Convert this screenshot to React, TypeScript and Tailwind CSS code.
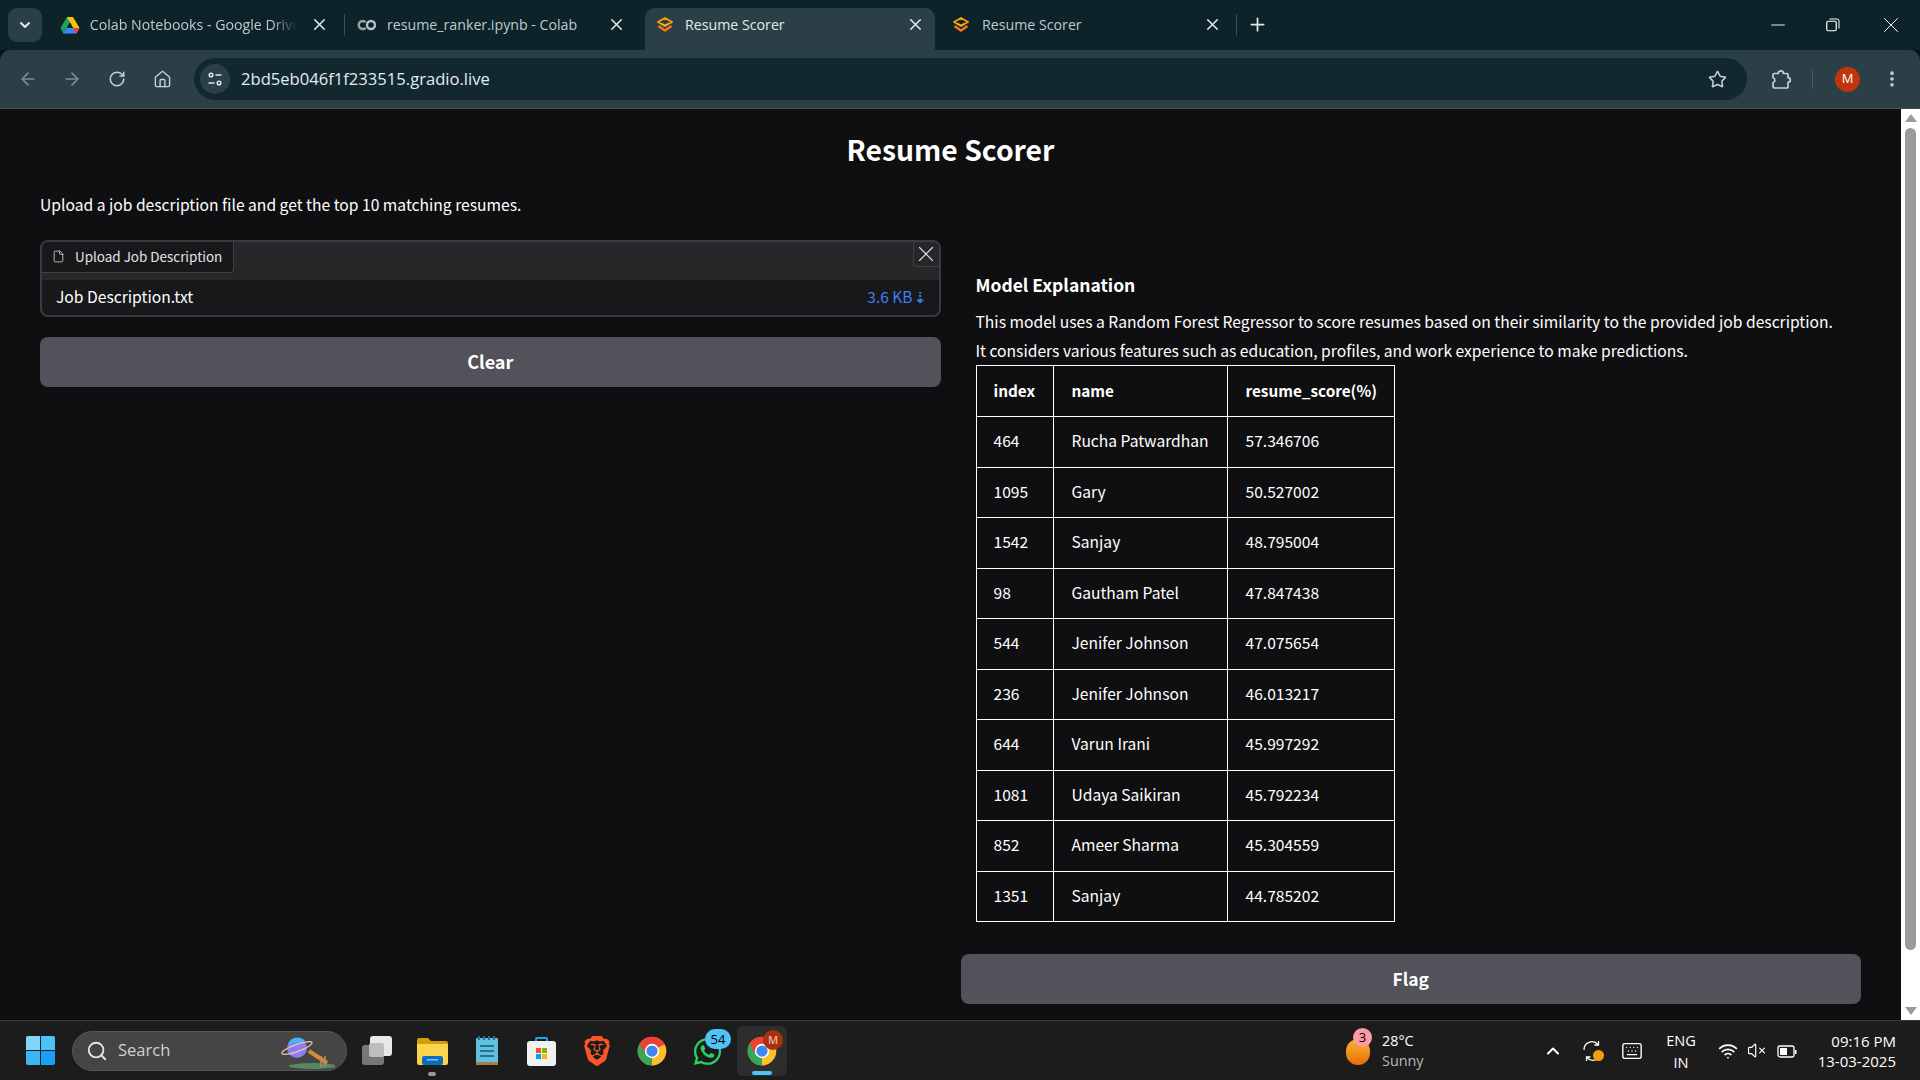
import { ArrowLeft, ArrowRight, RotateCw, Home, Star, ChevronDown, ChevronUp, X, Plus, Minus, EllipsisVertical, Search, Wifi, Keyboard, VolumeX, File } from "lucide-react";
import { SiBrave } from "react-icons/si";
import { FaWhatsapp } from "react-icons/fa";

const rows = [
  ["464", "Rucha Patwardhan", "57.346706"],
  ["1095", "Gary", "50.527002"],
  ["1542", "Sanjay", "48.795004"],
  ["98", "Gautham Patel", "47.847438"],
  ["544", "Jenifer Johnson", "47.075654"],
  ["236", "Jenifer Johnson", "46.013217"],
  ["644", "Varun Irani", "45.997292"],
  ["1081", "Udaya Saikiran", "45.792234"],
  ["852", "Ameer Sharma", "45.304559"],
  ["1351", "Sanjay", "44.785202"],
];

const source = "font-['Noto_Sans_CJK_JP','Noto_Sans',sans-serif]";

function GradioIcon() {
  return (
    <svg width="18" height="18" viewBox="0 0 18 18" fill="none" className="shrink-0">
      <path d="M9 2 L16 6 L9 10 L2 6 Z" stroke="#f59e0b" strokeWidth="2" strokeLinejoin="round" />
      <path d="M2.5 10 L9 14.5 L15.5 10" stroke="#f97316" strokeWidth="2.4" strokeLinejoin="round" />
      <path d="M6 7.5 L9 9.5 L12 7.5" stroke="#fbbf24" strokeWidth="1.4" />
    </svg>
  );
}

function DriveIcon() {
  return (
    <svg width="20" height="18" viewBox="0 0 20 18" className="shrink-0">
      <path d="M7 1h6l-6.5 11H0.5z" fill="#1fa463" />
      <path d="M13 1l6.5 11h-6.2L7 1z" fill="#ffc107" />
      <path d="M0.5 12h19l-3 5.5H3.5z" fill="#4285f4" />
      <path d="M0.5 12h6l-3 5.5z" fill="#0f9d58" />
      <path d="M13.3 12h6.2l-3 5.5z" fill="#ea4335" />
    </svg>
  );
}

function ColabIcon() {
  return (
    <svg width="20" height="12" viewBox="0 0 20 12" fill="none" className="shrink-0">
      <path d="M8.6 3.2A4 4 0 1 0 8.6 8.8" stroke="#9aa5a8" strokeWidth="2.4" />
      <circle cx="14" cy="6" r="4" stroke="#b7c0c2" strokeWidth="2.4" />
    </svg>
  );
}

function ChromeIcon({ size = 30 }: { size?: number }) {
  return (
    <svg width={size} height={size} viewBox="0 0 48 48" className="shrink-0">
      <circle cx="24" cy="24" r="23" fill="#ea4335" />
      <path d="M24 24 L44 13 A23 23 0 0 1 24 47 Z" fill="#fbc02d" />
      <path d="M24 24 L24 47 A23 23 0 0 1 4 12.5 Z" fill="#34a853" />
      <path d="M24 13 H44 A23 23 0 0 0 4 12.5 L14 30 Z" fill="#ea4335" />
      <circle cx="24" cy="24" r="11.5" fill="#fff" />
      <circle cx="24" cy="24" r="9" fill="#4285f4" />
    </svg>
  );
}

function Chrome() {
  const tabText = "overflow-hidden whitespace-nowrap text-[14.2px]";
  return (
    <div className="font-['Open_Sans',sans-serif] shrink-0">
      <div className="h-[50px] bg-[#0c2329] flex items-center">
        <div className="ml-[8px] w-[34px] h-[34px] rounded-[9px] bg-[#2a4046] flex items-center justify-center shrink-0">
          <ChevronDown size={16} strokeWidth={3} className="text-[#e3e9ea]" />
        </div>
        <div className="flex self-end ml-[18px] h-[42px]">
          <div className="flex items-center w-[285px] pb-[9px] shrink-0 text-[#c0cacc]">
            <span className="w-[30px]"><DriveIcon /></span>
            <span className={`w-[209px] mr-[13px] [mask-image:linear-gradient(to_right,black_88%,transparent)] ${tabText}`}>Colab Notebooks - Google Drive</span>
            <X size={19} strokeWidth={2} className="text-[#dfe6e7] shrink-0" />
            <div className="w-[1px] h-[22px] bg-[#3a4f54] ml-[15px]" />
          </div>
          <div className="flex items-center h-[42px] pl-[12px] w-[300px] pb-[9px] shrink-0 text-[#c0cacc]">
            <span className="w-[30px]"><ColabIcon /></span>
            <span className={`w-[220px] ${tabText}`}>resume_ranker.ipynb - Colab</span>
            <X size={19} strokeWidth={2} className="text-[#dfe6e7] shrink-0" />
          </div>
          <div className="flex items-center w-[290px] pl-[11px] pb-[9px] rounded-t-[10px] bg-[#2a4046] text-[#e3e9ea] shrink-0">
            <span className="w-[29px]"><GradioIcon /></span>
            <span className={`w-[221px] ${tabText}`}>Resume Scorer</span>
            <X size={19} strokeWidth={2} className="text-[#dfe6e7] shrink-0" />
          </div>
          <div className="flex items-center w-[340px] pl-[17px] pb-[9px] text-[#c0cacc] shrink-0">
            <span className="w-[30px]"><GradioIcon /></span>
            <span className={`w-[221px] ${tabText}`}>Resume Scorer</span>
            <X size={19} strokeWidth={2} className="text-[#dfe6e7] shrink-0" />
            <div className="w-[1px] h-[22px] bg-[#3a4f54] ml-[14px] shrink-0" />
            <Plus size={21} strokeWidth={2} className="text-[#e3e9ea] ml-[10px] shrink-0" />
          </div>
        </div>
        <div className="ml-auto flex items-center pr-[16px] text-white">
          <Minus size={22} strokeWidth={1} className="mr-[37px]" />
          <svg width="14" height="14" viewBox="0 0 14 14" fill="none" stroke="currentColor" className="mr-[38px]">
            <rect x="0.75" y="3.25" width="9.5" height="9.5" rx="1.5" strokeWidth="1.2" />
            <path d="M3.5 1h7.5a2 2 0 0 1 2 2v7.5" strokeWidth="1" />
          </svg>
          <X size={26} strokeWidth={0.9} />
        </div>
      </div>
      <div className="h-[59px] bg-[#2a4046] border-b border-[#4a4d4e] flex items-center rounded-t-[10px]">
        <ArrowLeft size={20} strokeWidth={2} className="ml-[18px] text-[#7d8d91]" />
        <ArrowRight size={20} strokeWidth={2} className="ml-[24px] text-[#7d8d91]" />
        <RotateCw size={18} strokeWidth={2} className="ml-[26px] text-[#c6d0d2]" />
        <Home size={19} strokeWidth={1.8} className="ml-[27px] text-[#c6d0d2]" />
        <div className="ml-[22px] h-[42px] w-[1553px] bg-[#12282f] rounded-full flex items-center pl-[6px] shrink-0">
          <div className="w-[30px] h-[30px] rounded-full bg-[#2a4046] flex items-center justify-center">
            <svg width="16" height="16" viewBox="0 0 16 16" fill="none" stroke="#dfe6e7" strokeWidth="1.5">
              <circle cx="4" cy="4" r="1.8" />
              <path d="M8.5 4h6M1.5 12h6" />
              <circle cx="12" cy="12" r="1.8" />
            </svg>
          </div>
          <span className="ml-[11px] text-[16.6px] text-[#e3ecef] leading-none">2bd5eb046f1f233515.gradio.live</span>
          <Star size={19} strokeWidth={2} className="ml-auto mr-[20px] text-[#c6d0d2]" />
        </div>
        <svg width="22" height="22" viewBox="0 0 22 22" fill="none" stroke="#c6d0d2" strokeWidth="1.7" strokeLinejoin="round" className="ml-[23px] shrink-0">
          <path d="M3 6.5a1 1 0 0 1 1-1h4.2a2.6 2.6 0 0 1 5.2 0H17a1 1 0 0 1 1 1v3.2a2.3 2.3 0 0 1 0 4.6V19a1 1 0 0 1-1 1H5a2 2 0 0 1-2-2v-3.2a2.6 2.6 0 0 0 0-5z" />
        </svg>
        <div className="ml-[20px] w-[1px] h-[20px] bg-[#455a60]" />
        <div className="ml-[22px] w-[25px] h-[25px] rounded-full bg-[#c0360c] flex items-center justify-center text-white text-[13px]">M</div>
        <EllipsisVertical size={20} strokeWidth={2.4} className="ml-[22px] text-[#c6d0d2]" />
      </div>
    </div>
  );
}

function Page() {
  return (
    <div className={`flex-1 min-w-0 overflow-hidden px-[40px] text-white ${source}`}>
      <h1 className="text-center text-[28.3px] font-semibold leading-[40px] pt-[20px]">Resume Scorer</h1>
      <p className="mt-[24px] text-[15.65px] leading-[24px]">Upload a job description file and get the top 10 matching resumes.</p>
      <div className="grid grid-cols-2 gap-[20px] mt-[23px]">
        <div className="flex flex-col gap-[20px]">
          <div className="relative h-[77px] rounded-[8px] border-2 border-[#3a3a40] bg-[#27272a] overflow-hidden">
            <div className="flex items-center h-[31px] w-[192px] bg-[#18181b] border-r border-b border-[#3f3f46] rounded-br-[4px] pl-[10px] text-[13.45px] text-[#e4e4e7]">
              <File size={13} strokeWidth={1.5} className="text-[#d4d4d8] -translate-y-[1px]" />
              <span className="ml-[10px] leading-none">Upload Job Description</span>
            </div>
            <div className="mt-[7px] h-[35px] bg-[#18181b] flex items-center justify-between pl-[14px] pr-[12px] text-[15.65px]">
              <span className="-translate-y-[1px]">Job Description.txt</span>
              <span className="text-[#3b7ff2] text-[15.5px] -translate-y-[1px] whitespace-nowrap font-['Noto_Sans_CJK_JP','DejaVu_Sans',sans-serif]">3.6 KB<span className="ml-[1px] font-semibold">⇣</span></span>
            </div>
            <div className="absolute top-0 right-0 w-[26px] h-[25px] border-l border-b border-[#3f3f46] rounded-bl-[4px] bg-[#27272a] flex items-center justify-center">
              <X size={26} strokeWidth={1} className="text-[#e4e4e7] shrink-0" />
            </div>
          </div>
          <button className="h-[50px] rounded-[8px] bg-[#52525b] text-[18px] font-semibold text-white pb-[1px]">Clear</button>
        </div>
        <div className="flex flex-col">
          <div className="px-[15px] pt-[31px]">
            <h2 className="text-[17.5px] font-semibold leading-[28px]">Model Explanation</h2>
            <p className="mt-[9px] text-[15.65px] leading-[28.5px] whitespace-nowrap">
              This model uses a Random Forest Regressor to score resumes based on their similarity to the provided job description.<br />
              It considers various features such as education, profiles, and work experience to make predictions.
            </p>
            <table className="border-collapse text-[15.6px] w-[419px] table-fixed">
              <thead>
                <tr className="h-[51px]">
                  <th className="border border-white text-left font-semibold text-[15.3px] pl-[17px] pb-[2px] w-[77px]">index</th>
                  <th className="border border-white text-left font-semibold text-[15.3px] pl-[18px] pb-[2px] w-[174px]">name</th>
                  <th className="border border-white text-left font-semibold text-[15.3px] pl-[18px] pb-[2px]">resume_score(%)</th>
                </tr>
              </thead>
              <tbody>
                {rows.map((r, i) => (
                  <tr key={i} className="h-[50.5px]">
                    {r.map((c, j) => (
                      <td key={j} className={`border border-white font-normal pb-[2px] ${j === 0 ? "pl-[17px]" : "pl-[18px]"}`}>{c}</td>
                    ))}
                  </tr>
                ))}
              </tbody>
            </table>
          </div>
          <button className="mt-[32px] h-[50px] rounded-[8px] bg-[#52525b] text-[17.5px] font-semibold text-white">Flag</button>
        </div>
      </div>
    </div>
  );
}

function Scrollbar() {
  return (
    <div className="w-[19px] shrink-0 bg-white flex flex-col items-center">
      <div className="mt-[5px] w-0 h-0 border-x-[6px] border-x-transparent border-b-[8px] border-b-[#9b9b9b]" />
      <div className="mt-[6px] w-[11px] h-[822px] bg-[#9b9b9b] rounded-full" />
      <div className="mt-auto mb-[5px] w-0 h-0 border-x-[6px] border-x-transparent border-t-[8px] border-t-[#9b9b9b]" />
    </div>
  );
}

function Taskbar() {
  return (
    <div className="h-[60px] shrink-0 bg-[#1c1c1c] border-t border-[#3a3a3a] flex items-center font-['Open_Sans',sans-serif] text-white">
      <div className="ml-[26px] grid grid-cols-2 gap-[1.5px] w-[29px] h-[29px] shrink-0">
        <div className="bg-[#7fd6fb] rounded-tl-[2px]" />
        <div className="bg-[#4cc2fa] rounded-tr-[2px]" />
        <div className="bg-[#3bb5f8] rounded-bl-[2px]" />
        <div className="bg-[#1aa1f5] rounded-br-[2px]" />
      </div>
      <div className="relative ml-[17px] w-[275px] h-[40px] rounded-full bg-[#454545] border border-[#555] flex items-center pl-[13px] shrink-0">
        <Search size={22} strokeWidth={2} className="text-[#e6e6e6]" />
        <span className="ml-[10px] text-[16.5px] text-[#d0d0d0]">Search</span>
        <svg width="56" height="40" viewBox="0 0 56 40" className="absolute right-[11px] top-0">
          <ellipse cx="34" cy="34" rx="24" ry="3" fill="#5fa56e" opacity=".7" />
          <circle cx="18" cy="16" r="10" fill="#8f7bf0" />
          <path d="M9 12a10 10 0 0 1 17-3z" fill="#38bdf8" />
          <ellipse cx="18" cy="16" rx="16" ry="3.5" fill="none" stroke="#e8c9a8" strokeWidth="1.3" transform="rotate(-20 18 16)" />
          <path d="M30 19l18 12" stroke="#d68b3a" strokeWidth="4" />
          <path d="M42 24v11M46 24v11" stroke="#b98a5e" strokeWidth="1.5" />
        </svg>
      </div>
      <div className="relative ml-[15px] w-[30px] h-[30px] shrink-0">
        <div className="absolute left-0 bottom-[1px] w-[22px] h-[20px] rounded-[3px] bg-[#777]" />
        <div className="absolute right-0 top-0 w-[22px] h-[20px] rounded-[3px] bg-[#e8e8e8]" />
        <div className="absolute left-[7px] top-[7px] w-[15px] h-[14px] rounded-[2px] bg-[#bdbdbd]" />
      </div>
      <div className="relative ml-[25px] w-[31px] h-[28px] shrink-0">
        <svg width="31" height="28" viewBox="0 0 31 28">
          <path d="M0 3a2 2 0 0 1 2-2h9l3 3h15a2 2 0 0 1 2 2v3H0z" fill="#d59d08" />
          <path d="M0 7h31v19a2 2 0 0 1-2 2H2a2 2 0 0 1-2-2z" fill="#fcd34d" />
          <rect x="5" y="19" width="21" height="9" rx="2" fill="#0f6cbd" />
          <rect x="10" y="22" width="11" height="1.5" fill="#7cc4f5" />
        </svg>
        <div className="absolute left-[11px] top-[35px] w-[8px] h-[4px] rounded-full bg-[#9a9a9a]" />
      </div>
      <svg width="24" height="30" viewBox="0 0 24 30" className="ml-[27px] shrink-0">
        <rect x="1" y="2" width="22" height="27" rx="1" fill="#60c0e0" />
        <rect x="1" y="26" width="22" height="3" fill="#b07a3c" />
        <path d="M4 0v4M9 0v4M14 0v4M19 0v4" stroke="#2a6f8c" strokeWidth="2" />
        <path d="M5 10h14M5 15h14M5 20h14" stroke="#2a6f8c" strokeWidth="1.8" />
      </svg>
      <svg width="29" height="30" viewBox="0 0 29 30" className="ml-[28px] shrink-0">
        <path d="M9 6V3a1 1 0 0 1 1-1h9a1 1 0 0 1 1 1v3" fill="none" stroke="#1ea7e8" strokeWidth="2" />
        <rect x="0" y="5" width="29" height="25" rx="3" fill="#f1f1f1" />
        <rect x="9" y="12" width="5" height="5" fill="#f25022" />
        <rect x="15" y="12" width="5" height="5" fill="#7fba00" />
        <rect x="9" y="18" width="5" height="5" fill="#00a4ef" />
        <rect x="15" y="18" width="5" height="5" fill="#ffb900" />
      </svg>
      <SiBrave size={30} color="#fb542b" className="ml-[26px] shrink-0" />
      <span className="ml-[25px] shrink-0"><ChromeIcon /></span>
      <div className="relative ml-[25px] w-[30px] h-[30px] shrink-0">
        <FaWhatsapp size={31} color="#25d366" />
        <span className="absolute left-[13px] top-[-7px] w-[26px] h-[20px] rounded-full bg-[#4fc3f7] text-black text-[13px] leading-[20px] text-center">54</span>
      </div>
      <div className="relative ml-[15px] w-[50px] h-[50px] rounded-[5px] bg-[#2d2d2d] flex items-center justify-center shrink-0">
        <ChromeIcon />
        <span className="absolute left-[26px] top-[4px] w-[20px] h-[20px] rounded-full bg-[#a8300c] text-[#e8b5a2] text-[11px] leading-[20px] text-center font-semibold">M</span>
        <span className="absolute left-[15px] bottom-[1px] w-[20px] h-[4px] rounded-full bg-[#4fc3f7]" />
      </div>

      <div className="relative ml-[559px] w-[24px] h-[26px] shrink-0 rounded-full bg-gradient-to-b from-[#f5b52e] to-[#ea6a0a] mt-[3px]">
        <span className="absolute left-[7px] top-[-11px] w-[19px] h-[19px] rounded-full bg-[#ff9aa2] text-black text-[13px] leading-[19px] text-center">3</span>
      </div>
      <div className="ml-[12px] w-[60px] shrink-0 text-[14.4px] leading-[20px]">
        <div>28°C</div>
        <div className="text-[#b9b9b9]">Sunny</div>
      </div>
      <ChevronUp size={20} strokeWidth={2.4} className="ml-[101px] shrink-0" />
      <div className="relative ml-[19px] w-[21px] h-[22px] shrink-0">
        <svg width="21" height="22" viewBox="0 0 21 22" fill="none" stroke="white" strokeWidth="1.3">
          <path d="M2 10A8 8 0 0 1 16 4.5M16.5 1v4h-4M19 12a8 8 0 0 1-14 5.5M4.5 21v-4h4" />
        </svg>
        <span className="absolute right-[-1px] bottom-[1px] w-[11px] h-[11px] rounded-full bg-[#f59e0b]" />
      </div>
      <Keyboard size={22} strokeWidth={1.5} className="ml-[18px] shrink-0" />
      <div className="ml-[13px] w-[50px] text-center text-[14.6px] leading-[22px] shrink-0">
        <div>ENG</div>
        <div>IN</div>
      </div>
      <Wifi size={20} strokeWidth={2} className="ml-[12px] shrink-0" />
      <VolumeX size={19} strokeWidth={1.5} className="ml-[9px] shrink-0" />
      <svg width="20" height="16" viewBox="0 0 20 16" fill="none" className="ml-[11px] shrink-0">
        <rect x="1" y="3" width="16" height="11" rx="2" stroke="white" strokeWidth="1.3" />
        <rect x="3" y="5" width="7" height="7" fill="white" />
        <rect x="18" y="7" width="1.5" height="4" fill="white" />
      </svg>
      <div className="ml-auto pr-[24px] text-right text-[15px] leading-[20px] shrink-0">
        <div>09:16 PM</div>
        <div>13-03-2025</div>
      </div>
    </div>
  );
}

export default function App() {
  return (
    <div className="w-[1920px] h-[1080px] flex flex-col overflow-hidden bg-[#0f0f11]">
      <Chrome />
      <div className="flex-1 min-h-0 flex">
        <Page />
        <Scrollbar />
      </div>
      <Taskbar />
    </div>
  );
}
